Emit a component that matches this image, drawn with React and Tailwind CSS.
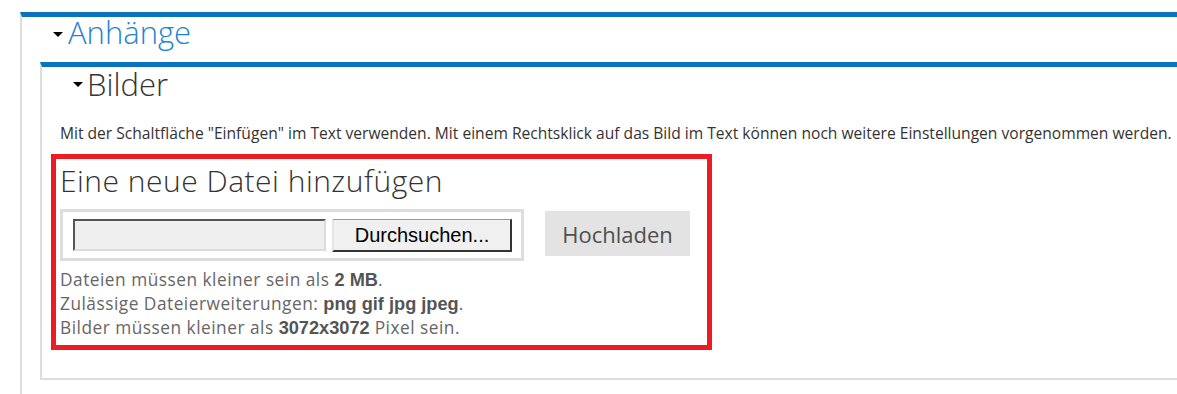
const Caret = ({ className = "" }) => (
  <span
    className={`inline-block w-0 h-0 border-l-[5px] border-r-[5px] border-t-[5px] border-l-transparent border-r-transparent border-t-black ${className}`}
  />
);

const App = () => {
  return (
    <div className="min-h-screen overflow-hidden bg-white pt-3 pl-5 font-['Open_Sans',sans-serif]">
      <div className="border-l-2 border-t-[5px] border-l-[#dddddd] border-t-[#0b72bd] pb-6">
        {/* Anhänge */}
        <h2 className="flex items-center pl-[31px] text-[31px] font-light leading-[30px] text-[#2483d0]">
          <Caret className="mt-[4px] mr-[5px]" />
          <span>Anhänge</span>
        </h2>

        <div className="ml-[18px] mt-[15px] border-l-2 border-b-2 border-t-[5px] border-l-[#dddddd] border-b-[#dddddd] border-t-[#0b72bd] pb-[28px]">
          <h3 className="mt-[3px] flex items-center pl-[31px] text-[31px] font-light leading-[28px] text-[#333]">
            <Caret className="mr-[4px]" />
            <span>Bilder</span>
          </h3>

          <div className="pl-[18px]">
            <p className="mt-[25px] whitespace-nowrap text-[15.6px] leading-[20px] text-[#333]">
              Mit der Schaltfläche "Einfügen" im Text verwenden. Mit einem Rechtsklick auf das Bild im Text können noch weitere Einstellungen vorgenommen werden.
            </p>

            <div className="ml-[-9px] mt-[11px] w-[661px] border-[5px] border-[#ed1c24] px-[4px] pt-[3px] pb-[5px]">
              <h4 className="text-[30px] font-light leading-[38px] tracking-[0.5px] text-[#333]">
                Eine neue Datei hinzufügen
              </h4>

              <div className="mt-[9px] flex items-start gap-[21px]">
                <div className="flex w-[464px] gap-[6px] border-[3px] border-[#dddddd] pl-[10px] pt-[7px] pr-[9px] pb-[6px]">
                  <div className="h-[32px] w-[253px] border-2 border-t-[#555] border-l-[#555] border-b-[#dcdcdc] border-r-[#dcdcdc] bg-[#efefef]" />
                  <button className="h-[33px] w-[180px] border-t border-l-2 border-r-2 border-b-2 border-t-[#999] border-l-[#e5e5e5] border-r-[#333] border-b-[#333] bg-[#f0f0f0] font-['Liberation_Sans',Arial,sans-serif] text-[20px] leading-none text-black">
                    Durchsuchen...
                  </button>
                </div>
                <button className="mt-[2px] h-[45px] w-[145px] bg-[#e3e3e3] text-[22px] leading-none text-[#4f4f4f]">
                  Hochladen
                </button>
              </div>

              <div className="mt-[7px] text-[17.3px] leading-[24px] tracking-[0.5px] text-[#666]">
                <div>
                  Dateien müssen kleiner sein als{" "}
                  <strong className="font-['Liberation_Sans',Arial,sans-serif] text-[18.2px] font-bold tracking-normal text-[#555]">2 MB</strong>.
                </div>
                <div>
                  Zulässige Dateierweiterungen:{" "}
                  <strong className="font-['Liberation_Sans',Arial,sans-serif] text-[18.2px] font-bold tracking-normal text-[#555]">png gif jpg jpeg</strong>.
                </div>
                <div>
                  Bilder müssen kleiner als{" "}
                  <strong className="font-['Liberation_Sans',Arial,sans-serif] text-[18.2px] font-bold tracking-normal text-[#555]">3072x3072</strong> Pixel sein.
                </div>
              </div>
            </div>
          </div>
        </div>
      </div>
    </div>
  );
};

export default App;
